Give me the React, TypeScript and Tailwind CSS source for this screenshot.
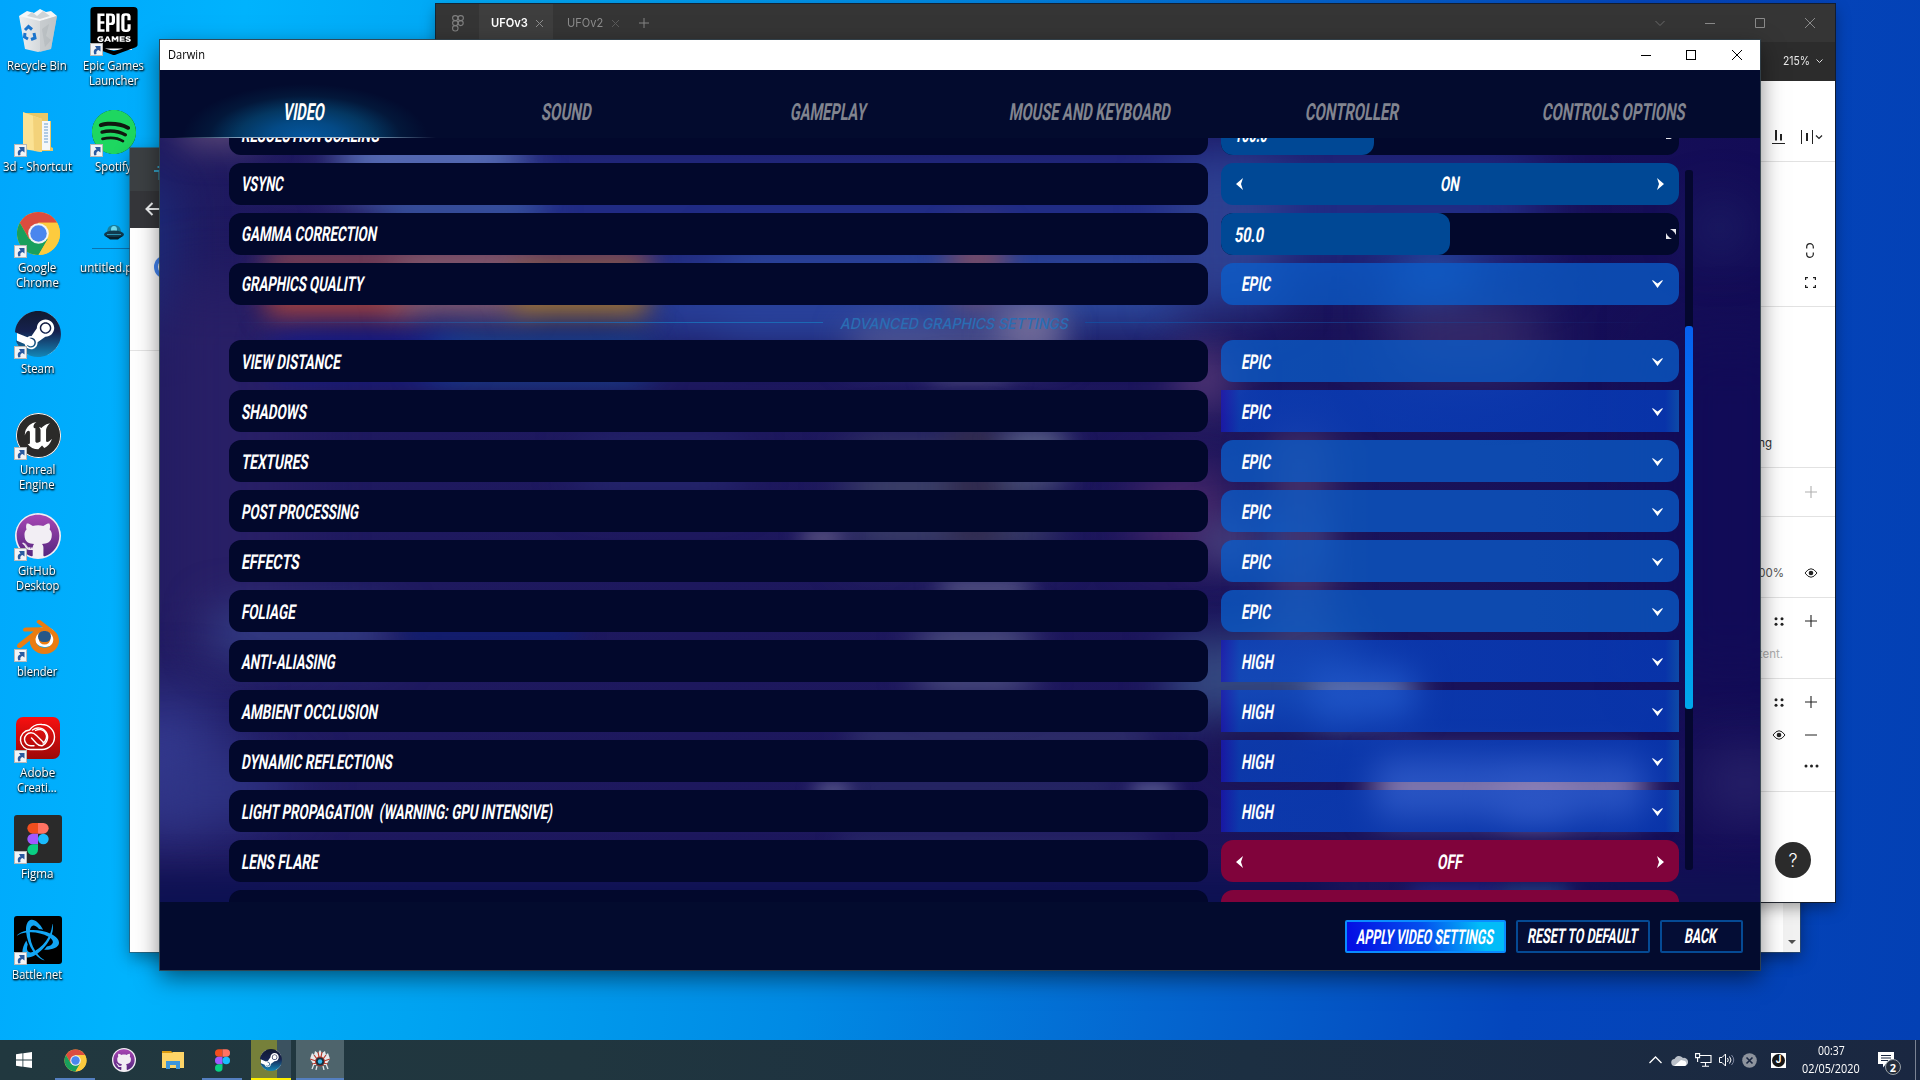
import { useLayoutEffect, useRef, useState, type ReactNode } from "react";
import { SiEpicgames, SiSpotify, SiSteam, SiUnrealengine, SiBlender, SiBattledotnet } from "react-icons/si";
import { FaGithub } from "react-icons/fa";

/* Text squeezed or stretched horizontally to a given width. */
function Fit({ w, skew = 0, className = "", children }: { w: number; skew?: number; className?: string; children: ReactNode }) {
  const ref = useRef<HTMLSpanElement>(null);
  const [scale, setScale] = useState(1);
  useLayoutEffect(() => {
    if (ref.current) setScale(w / ref.current.offsetWidth);
  }, [w, children]);
  return (
    <span className={`inline-block shrink-0 whitespace-pre ${className}`} style={{ width: w }}>
      <span ref={ref} className="inline-block origin-left" style={{ transform: `skewX(${-skew}deg) scaleX(${scale})` }}>
        {children}
      </span>
    </span>
  );
}

function Label({ w, className = "", children }: { w: number; className?: string; children: ReactNode }) {
  return (
    <Fit w={w} skew={9} className={`font-[Roboto,sans-serif] text-[20.5px] leading-[24px] font-bold text-white ${className}`}>
      {children}
    </Fit>
  );
}

/* ---------- product icons ---------- */

function Gradients() {
  return (
    <svg className="absolute h-0 w-0">
      <defs>
        <linearGradient id="steam" x1="0" y1="0" x2="0" y2="1">
          <stop offset="0" stopColor="#111a30" />
          <stop offset="0.45" stopColor="#16224f" />
          <stop offset="1" stopColor="#1387b8" />
        </linearGradient>
        <linearGradient id="hub" x1="0" y1="0" x2="0" y2="1">
          <stop offset="0" stopColor="#a846b4" />
          <stop offset="1" stopColor="#55277f" />
        </linearGradient>
        <linearGradient id="bin" x1="0" y1="0" x2="1" y2="0">
          <stop offset="0" stopColor="#eceff1" />
          <stop offset="0.55" stopColor="#d5d9dc" />
          <stop offset="1" stopColor="#b4babd" />
        </linearGradient>
        <linearGradient id="adobe" x1="0" y1="0" x2="0" y2="1">
          <stop offset="0" stopColor="#f81010" />
          <stop offset="1" stopColor="#9c0808" />
        </linearGradient>
      </defs>
    </svg>
  );
}

function Chrome({ size }: { size: number }) {
  return (
    <svg width={size} height={size} viewBox="0 0 48 48">
      <circle cx="24" cy="24" r="23" fill="#f9cb3a" />
      <path d="M4.1 12.5A23 23 0 0 1 43.9 12.5H24L14 29.8Z" fill="#db4c3f" />
      <path d="M4.1 12.5A23 23 0 0 0 24 47L34 29.8H14Z" fill="#199f5c" />
      <path d="M43.9 12.5A23 23 0 0 1 24 47L34 29.8L24 12.5Z" fill="#fdcb3e" />
      <circle cx="24" cy="24" r="11" fill="#f1f3f4" />
      <circle cx="24" cy="24" r="8.8" fill="#4a86ee" />
    </svg>
  );
}

function FigmaMark({ w, h }: { w: number; h: number }) {
  return (
    <svg width={w} height={h} viewBox="0 0 20 30">
      <path d="M5 0h5v10H5A5 5 0 0 1 5 0Z" fill="#f24e1e" />
      <path d="M10 0h5a5 5 0 0 1 0 10h-5Z" fill="#ff7262" />
      <path d="M5 10h5v10H5a5 5 0 0 1 0-10Z" fill="#a259ff" />
      <circle cx="15" cy="15" r="5" fill="#1abcfe" />
      <path d="M5 20h5v5a5 5 0 1 1-5-5Z" fill="#0acf83" />
    </svg>
  );
}

function GithubDesktop({ size }: { size: number }) {
  return (
    <span className="flex items-center justify-center rounded-full bg-[#f2eef4]" style={{ width: size, height: size }}>
      <FaGithub size={size - 2} fill="url(#hub)" />
    </span>
  );
}

function SteamIcon({ size }: { size: number }) {
  return (
    <span className="flex items-center justify-center rounded-full" style={{ width: size, height: size }}>
      <span className="flex items-center justify-center rounded-full bg-[linear-gradient(#fff,#fff)] bg-[length:92%_92%] bg-center bg-no-repeat">
        <SiSteam size={size} fill="url(#steam)" />
      </span>
    </span>
  );
}

function RecycleBin() {
  return (
    <svg width="40" height="44" viewBox="0 0 40 44">
      <path d="M1 7 39 7 33 40 20 43 7 40Z" fill="url(#bin)" />
      <path d="M1 7 9 2 16 4 22 0 28 3 33 2 39 7 22 12Z" fill="#f5f6f7" />
      <path d="M9 7 14 3 19 7 25 2 32 7 22 10Z" fill="#cfd4d7" />
      <path d="M22 12 39 7 33 40 22 43Z" fill="#c3c8cb" opacity="0.7" />
      <path d="M24 20 31 15 28 27 33 31 27 38Z" fill="#aeb4b8" opacity="0.5" />
      <g fill="none" stroke="#1b74cc" strokeWidth="3">
        <path d="M7 21 10.500 17.500 14 20.500" />
        <path d="M16 24 17 29 13 30.500" />
        <path d="M10 30 6.500 28 7 24" />
      </g>
    </svg>
  );
}

function Folder() {
  return (
    <svg width="34" height="42" viewBox="0 0 34 42">
      <path d="M2 2h25v8h3v26l2 1v3h-12L2 37Z" fill="#e9c766" />
      <path d="M20 10h9v29h-9Z" fill="#f4f7fa" />
      <path d="M23 13h4M23 16h4M23 19h4M23 22h4M23 25h4M23 28h4M23 31h4" stroke="#6d9ecb" strokeWidth="1.200" />
      <path d="M2 1 21 8v33L2 38Z" fill="#fbe294" />
      <path d="M12 5 21 8v33l-8-1Z" fill="#f3d27a" />
    </svg>
  );
}

function AdobeCC() {
  return (
    <svg width="44" height="42" viewBox="0 0 44 42">
      <rect width="44" height="42" rx="7" fill="url(#adobe)" />
      <g fill="none" stroke="#fff" strokeWidth="1.400" strokeLinecap="round">
        <path d="M15 32.500A9.500 9.500 0 0 1 13.500 13C16.500 9 21 7 26 7.500A12.500 12.500 0 0 1 26 32.500Z" />
        <path d="M18 28.800H15A6.500 6.500 0 0 1 15 15.800C17.500 15.800 19 17 20.500 18.500L28 26" />
        <path d="M16.500 13A9.300 9.300 0 1 1 26 28.800C23.500 28.800 22 28 20.500 26.500L15.500 21" />
        <path d="M19.500 13.500A6.600 6.600 0 1 1 27 26" />
      </g>
    </svg>
  );
}

function BlenderIcon() {
  return (
    <span className="relative flex h-[44px] w-[44px] items-center justify-center">
      <span className="absolute top-[12px] left-[18px] h-[20px] w-[22px] rounded-full bg-white" />
      <SiBlender className="relative h-[42px] w-[46px] text-[#ea7c10]" />
      <span className="absolute top-[16px] left-[22px] h-[11px] w-[13px] rounded-full bg-[#265787]" />
    </span>
  );
}

function UfoIcon() {
  return (
    <svg className="mt-[6px]" width="44" height="26" viewBox="0 0 44 26">
      <path d="M15 10C15 4 18 2 22 2s7 2 7 8Z" fill="#1b7f9c" />
      <ellipse cx="22" cy="6.500" rx="3" ry="3.500" fill="#6fdcf0" />
      <ellipse cx="22" cy="11.500" rx="10" ry="4" fill="#123c50" />
      <path d="M13 12.500q9 3 18 0l-5 4h-8Z" fill="#08202c" />
      <path d="M15 11.500h14" stroke="#2b96b6" strokeWidth="1" />
      <path d="M0 25.500h44" stroke="#0b73b0" />
    </svg>
  );
}

/* ---------- desktop ---------- */

function Shortcut() {
  return (
    <span className="absolute bottom-[-1px] left-0 flex h-[13px] w-[13px] items-center justify-center border border-[#b8b8b8] bg-[#f2f4f6]">
      <svg width="9" height="10" viewBox="0 0 9 10">
        <path d="M2.500 9.500C1 6.500 2 4 4.500 3.500L3 1H8.500V6.500L6.500 5C4.500 5.500 4 7 4.500 9Z" fill="#2a5aa0" />
      </svg>
    </span>
  );
}

function DesktopItem({ icon, lines, link = true }: { icon: ReactNode; lines: [string, number][]; link?: boolean }) {
  return (
    <div className="flex h-[101px] w-[76px] flex-col items-center">
      <div className="mt-px flex h-[48px] w-[48px] items-center justify-center relative">
        {icon}
        {link && <Shortcut />}
      </div>
      <div className="mt-[3px] mr-[2px] flex flex-col items-center font-['Open_Sans',sans-serif] text-[12px] leading-[15px] text-white [text-shadow:0_1px_2px_#000,1px_1px_2px_#000]">
        {lines.map(([t, w]) => (
          <Fit key={t} w={w}>{t}</Fit>
        ))}
      </div>
    </div>
  );
}

/* ---------- background windows ---------- */

function BrowserWindow() {
  return (
    <div className="absolute top-[148px] left-[130px] flex h-[804px] w-[1670px] flex-col bg-white shadow-[0_0_0_1px_rgba(60,80,90,0.6),0_6px_16px_rgba(0,0,0,0.4)]">
      <div className="flex h-[43px] shrink-0 items-center bg-[#3c4043] pt-[6px] pl-[24px]">
        <svg width="14" height="14" viewBox="0 0 14 14"><path d="M0 5h14M5.500 4V14M3.500 1h4" stroke="#35a0c4" strokeWidth="2" /></svg>
      </div>
      <div className="flex h-[37px] shrink-0 items-center bg-[#35363a] pb-px pl-[15px]">
        <svg width="16" height="14" viewBox="0 0 16 14" fill="none" stroke="#f1f3f4" strokeWidth="2"><path d="M16 7H2M7.500 1 1.500 7l6 6" /></svg>
      </div>
      <div className="flex min-h-0 flex-1 justify-between">
        <div className="flex w-full flex-col">
          <div className="flex h-[123px] border-b border-[#e4e4e4] pt-[27px] pl-[24px]">
            <span className="h-[24px] w-[24px] rounded-full border-4 border-[#4285f4]" />
          </div>
        </div>
        <div className="flex w-[17px] items-end justify-center bg-[#f1f1f1] pb-[8px]">
          <span className="h-0 w-0 border-x-4 border-t-4 border-x-transparent border-t-[#505050]" />
        </div>
      </div>
    </div>
  );
}

function Plus({ color = "#222" }: { color?: string }) {
  return <svg width="12" height="12" viewBox="0 0 12 12"><path d="M6 0v12M0 6h12" stroke={color} strokeWidth="1.100" /></svg>;
}
function Dots() {
  return (
    <svg width="10" height="9" viewBox="0 0 10 9" fill="#222">
      <circle cx="2" cy="1.700" r="1.500" /><circle cx="8" cy="1.700" r="1.500" /><circle cx="2" cy="7.300" r="1.500" /><circle cx="8" cy="7.300" r="1.500" />
    </svg>
  );
}
function Eye() {
  return (
    <svg width="14" height="10" viewBox="0 0 14 10" fill="none" stroke="#222">
      <path d="M1 5Q7-3.500 13 5 7 13.500 1 5Z" /><circle cx="7" cy="5" r="2.300" fill="#222" stroke="none" />
    </svg>
  );
}

function FigmaWindow() {
  return (
    <div className="absolute top-[4px] left-[436px] flex h-[898px] w-[1399px] flex-col bg-white font-[Inter,sans-serif] shadow-[0_0_0_1px_rgba(20,25,35,0.9),0_6px_14px_rgba(0,0,0,0.35)]">
      <div className="flex h-[38px] shrink-0 items-center justify-between bg-[#353535] text-[12px] text-[#8d8d8d]">
        <div className="flex h-full items-center">
          <div className="flex w-[43px] justify-center">
            <svg width="12" height="17" viewBox="0 0 12 17" fill="none" stroke="#808080" strokeWidth="1.100">
              <rect x="0.600" y="0.600" width="5.400" height="5" rx="2.500" /><rect x="6" y="0.600" width="5.400" height="5" rx="2.500" />
              <rect x="0.600" y="5.600" width="5.400" height="5" rx="2.500" /><circle cx="8.700" cy="8.100" r="2.500" /><rect x="0.600" y="10.600" width="5.400" height="5.400" rx="2.500" />
            </svg>
          </div>
          <div className="flex h-full w-[74px] items-center bg-[#3e3e3e] pl-[12px] font-semibold text-white">
            <Fit w={37}>UFOv3</Fit>
            <svg className="ml-[8px]" width="7" height="7" viewBox="0 0 7 7"><path d="m0 0 7 7M7 0 0 7" stroke="#8d8d8d" /></svg>
          </div>
          <div className="flex items-center pl-[14px]">
            <Fit w={36}>UFOv2</Fit>
            <svg className="ml-[9px]" width="7" height="7" viewBox="0 0 7 7"><path d="m0 0 7 7M7 0 0 7" stroke="#5a5a5a" /></svg>
            <svg className="ml-[20px]" width="10" height="10" viewBox="0 0 10 10"><path d="M5 0v10M0 5h10" stroke="#858585" /></svg>
          </div>
        </div>
        <svg width="160" height="12" viewBox="0 0 160 12" fill="none" stroke="#8a8a8a" className="mr-[20px]">
          <path d="m0.500 4 4.500 4.500L9.500 4" stroke="#6a6a6a" />
          <path d="M50 6.500h10M100.500 1.500h9v9h-9ZM150 1l10 10M160 1l-10 10" />
        </svg>
      </div>
      <div className="flex h-[39px] shrink-0 items-center justify-end bg-[#2c2c2c] pr-[12px] text-[11.500px] text-[#e8e8e8]">
        <Fit w={27}>215%</Fit>
        <svg className="ml-[6px]" width="7" height="5" viewBox="0 0 7 5"><path d="m0.500 0.500 3 3 3-3" fill="none" stroke="#ddd" /></svg>
      </div>
      <div className="ml-auto flex w-[240px] flex-1 flex-col text-[11.500px] [&>div]:border-[#e2e2e2]">
        <div className="flex h-[81px] shrink-0 items-end justify-end gap-[16px] border-b pr-[12px] pb-[17px]">
          <svg width="13" height="14" viewBox="0 0 13 14" fill="#222"><path d="M0 13h13v1H0ZM3 0h2v10.500H3ZM8 4h2v6.500H8Z" /></svg>
          <svg width="22" height="14" viewBox="0 0 22 14" fill="#222"><path d="M0 0h1v14H0ZM5 3h2v8H5ZM11 0h1v14h-1Z" /><path d="m15 5.500 3 3 3-3" fill="none" stroke="#222" strokeWidth="1.200" /></svg>
        </div>
        <div className="flex h-[145px] shrink-0 flex-col items-end justify-end gap-[19px] border-b pr-[19px] pb-[18px]">
          <svg className="mr-[2px]" width="8" height="15" viewBox="0 0 8 15" fill="none" stroke="#222" strokeWidth="1.200"><path d="M0.700 5.500V4a3.300 3.300 0 0 1 6.600 0v1.500M0.700 9.500V11a3.300 3.300 0 0 0 6.600 0V9.500" /></svg>
          <svg width="11" height="11" viewBox="0 0 11 11" fill="none" stroke="#222" strokeWidth="1.200"><path d="M3 0.600H0.600V3M8 0.600h2.400V3M3 10.400H0.600V8M8 10.400h2.400V8" /></svg>
        </div>
        <div className="flex h-[161px] shrink-0 items-end justify-end border-b pr-[63px] pb-[15px] leading-[18px] text-[#333]"><span>Clip pulling</span></div>
        <div className="flex h-[49px] shrink-0 items-center justify-end border-b pr-[18px] pb-px"><Plus color="#b0b0b0" /></div>
        <div className="flex h-[81px] shrink-0 items-end justify-end border-b pr-[17px] pb-[19px] text-[#555]">
          <span className="mr-[20px] leading-[10px]">100%</span><Eye />
        </div>
        <div className="flex h-[81px] shrink-0 flex-col items-end justify-end gap-[20px] border-b pr-[18px] pb-[17px]">
          <div className="flex items-center gap-[21px]"><Dots /><Plus /></div>
          <span className="mr-[34px] leading-[14px] text-[#b0b0b0]">content.</span>
        </div>
        <div className="flex h-[113px] shrink-0 flex-col items-end border-b pt-[17px] pr-[18px]">
          <div className="flex items-center gap-[21px]"><Dots /><Plus /></div>
          <div className="mt-[22px] flex items-center gap-[19px]"><Eye /><svg width="12" height="2"><path d="M0 1h12" stroke="#222" /></svg></div>
          <svg className="mt-[24px] mr-[-2px]" width="15" height="4" fill="#222"><circle cx="2" cy="2" r="1.500" /><circle cx="7.500" cy="2" r="1.500" /><circle cx="13" cy="2" r="1.500" /></svg>
        </div>
        <div className="flex flex-1 items-start justify-end pt-[50px] pr-[24px]">
          <span className="flex h-[36px] w-[36px] items-center justify-center rounded-full bg-[#2c2c2c] text-[18px] font-light text-white">?</span>
        </div>
      </div>
    </div>
  );
}

/* ---------- game settings ---------- */

type Blob = [x: number, y: number, w: number, h: number, color: string, blur: number];

/* Soft light patches behind the settings list, measured from the list's top left corner. */
const blobs: Blob[] = [
  [-40, 40, 50, 150, "#1b3080", 26],
  [20, -40, 80, 50, "#584676", 16],
  [0, 140, 140, 380, "#281f66", 30],
  [50, 470, 180, 50, "#343f86", 22],
  [-60, 560, 120, 130, "#343a90", 32],
  [-20, 620, 150, 60, "#2f3586", 28],
  [320, 10, 1060, 120, "#212c86", 30],
  [180, -20, 180, 80, "#566bb4", 20],
  [220, 50, 160, 50, "#36519e", 18],
  [560, 110, 470, 80, "#2d4ba0", 24],
  [480, 130, 300, 70, "#28409a", 22],
  [105, 105, 385, 30, "#7c4456", 14],
  [105, 135, 150, 46, "#9c4040", 13],
  [235, 120, 130, 58, "#8c6272", 16],
  [350, 130, 138, 50, "#9a7038", 13],
  [110, 200, 190, 36, "#101a94", 16],
  [270, 200, 220, 40, "#1450a0", 18],
  [240, 484, 180, 22, "#0c1f74", 12],
  [420, 300, 160, 60, "#24266c", 20],
  [790, 90, 55, 80, "#704a6a", 14],
  [690, 190, 210, 30, "#5c6096", 18],
  [840, 160, 60, 56, "#706a98", 16],
  [770, 226, 80, 14, "#68688e", 12],
  [690, 300, 200, 120, "#383c66", 22],
  [640, 390, 44, 20, "#5e5884", 10],
  [790, 280, 50, 130, "#302a4e", 14],
  [845, 290, 60, 50, "#565d86", 14],
  [780, 440, 90, 24, "#5a5a88", 12],
  [760, 480, 110, 80, "#484a7c", 18],
  [690, 592, 300, 16, "#404678", 14],
  [690, 640, 270, 20, "#2c3068", 14],
  [655, 646, 36, 14, "#686a98", 9],
  [970, 646, 44, 14, "#6a70a0", 9],
  [680, 700, 310, 10, "#3a4078", 12],
  [1020, 210, 50, 60, "#5c3c7a", 22],
  [980, 330, 90, 90, "#48286a", 24],
  [1010, 20, 110, 150, "#2e4090", 24],
  [1040, 385, 60, 40, "#484480", 18],
  [1115, 380, 40, 44, "#0f70d8", 16],
  [1110, 290, 60, 230, "#44306a", 20],
  [1010, 500, 190, 80, "#344880", 22],
  [1150, 530, 105, 50, "#5870b4", 16],
  [1060, 590, 90, 40, "#1c1450", 18],
  [1240, 120, 70, 50, "#2a68c8", 26],
  [1230, 160, 150, 80, "#352a6a", 28],
  [1215, 620, 270, 60, "#8078b0", 16],
  [1340, 640, 70, 40, "#8c80b8", 16],
  [1250, 752, 90, 10, "#2a3aac", 10],
  [1340, 752, 70, 10, "#2a6ca8", 10],
  [1540, 70, 40, 40, "#222a70", 26],
  [1540, 610, 90, 70, "#28226a", 28],
  [1500, 200, 140, 340, "#110b57", 30],
  [-60, 735, 1230, 60, "#0d1152", 16],
  [1430, 735, 200, 60, "#0f1152", 16],
];

function Backdrop() {
  return (
    <div className="absolute inset-0 overflow-hidden bg-[linear-gradient(90deg,#1f1a60,#1c175c_50%,#1a135a_75%,#130c56)]">
      {blobs.map(([x, y, w, h, color, blur], i) => (
        <span key={i} className="absolute rounded-[12px]" style={{ left: x, top: y, width: w, height: h, backgroundColor: color, filter: `blur(${blur}px)` }} />
      ))}
    </div>
  );
}

function Arrow({ right = false }: { right?: boolean }) {
  return (
    <svg width="9" height="12" viewBox="0 0 9 12" className={right ? "" : "-scale-x-100"}>
      <path d="M1 0 8 6 1 12 3 6Z" fill="#fff" />
    </svg>
  );
}

function Toggle({ text, w, off = false }: { text: string; w: number; off?: boolean }) {
  return (
    <div className={`flex h-full w-full items-center justify-between rounded-[12px] px-[14px] ${off ? "bg-[#80033b] pt-[2px]" : "bg-[#004895]"}`}>
      <Arrow />
      <Label w={w}>{text}</Label>
      <Arrow right />
    </div>
  );
}

function Slider({ text, w, fill }: { text: string; w: number; fill: number }) {
  return (
    <div className="flex h-full w-full items-center justify-between rounded-[12px] bg-[#02082c] pr-[3px]">
      <div className="flex h-full items-center rounded-[12px] bg-[#004895] pt-[2px] pl-[14px]" style={{ width: fill }}>
        <Label w={w}>{text}</Label>
      </div>
      <svg width="10" height="10" viewBox="0 0 10 10" fill="#e6e6ec"><path d="M4 0h6v6L8.500 3.500 6.500 1.500ZM0 4v6h6L3.500 8.500 1.500 6.500Z" /></svg>
    </div>
  );
}

function Select({ text, w, changed = false, low = false }: { text: string; w: number; changed?: boolean; low?: boolean }) {
  return (
    <div
      className={`flex h-full w-full items-center justify-between pr-[16px] pl-[21px] ${low ? "pt-[2px]" : ""} ${
        changed
          ? "bg-[linear-gradient(90deg,rgba(24,24,190,0.72),rgba(6,72,205,0.7)_4%,rgba(4,66,200,0.72)_97%,rgba(12,92,190,0.78))]"
          : "rounded-[12px] bg-[rgba(9,95,205,0.74)]"
      }`}
    >
      <Label w={w}>{text}</Label>
      <svg width="11" height="8" viewBox="0 0 11 8"><path d="M0 0.500Q1 0 2 1L5.500 3.500 9 1Q10 0 11 0.500L5.500 8Z" fill="#fff" /></svg>
    </div>
  );
}

function Row({ name, w, low = false, children }: { name: string; w: number; low?: boolean; children: ReactNode }) {
  return (
    <div className="mb-[8px] flex h-[42px] shrink-0 gap-[13px]">
      <div className={`flex w-[979px] items-center rounded-[12px] bg-[#02082c] pl-[13px] ${low ? "pt-[2px]" : ""}`}><Label w={w}>{name}</Label></div>
      <div className="w-[458px]">{children}</div>
    </div>
  );
}

const advanced: [string, number, string, number, boolean][] = [
  ["VIEW DISTANCE", 99, "EPIC", 29, false],
  ["SHADOWS", 65, "EPIC", 29, true],
  ["TEXTURES", 67, "EPIC", 29, false],
  ["POST PROCESSING", 117, "EPIC", 29, false],
  ["EFFECTS", 58, "EPIC", 29, false],
  ["FOLIAGE", 54, "EPIC", 29, false],
  ["ANTI-ALIASING", 94, "HIGH", 32, true],
  ["AMBIENT OCCLUSION", 136, "HIGH", 32, true],
  ["DYNAMIC REFLECTIONS", 151, "HIGH", 32, true],
  ["LIGHT PROPAGATION  (WARNING: GPU INTENSIVE)", 311, "HIGH", 32, true],
];

const tabs: [string, number][] = [
  ["VIDEO", 41], ["SOUND", 50], ["GAMEPLAY", 76], ["MOUSE AND KEYBOARD", 161], ["CONTROLLER", 93], ["CONTROLS OPTIONS", 143],
];

function GameWindow() {
  return (
    <div className="absolute top-[40px] left-[160px] flex h-[930px] w-[1600px] flex-col bg-[#030b2e] shadow-[0_0_0_1px_rgba(50,65,75,0.9),0_8px_22px_rgba(0,0,0,0.5)]">
      <div className="flex h-[30px] shrink-0 items-center justify-between bg-white pr-[18px] pl-[8px]">
        <Fit w={37} className="font-['Open_Sans',sans-serif] text-[12px] text-black">Darwin</Fit>
        <svg width="102" height="12" viewBox="0 0 102 12" fill="none" stroke="#000" shapeRendering="crispEdges" className="mb-px">
          <path d="M1 6.500h10M46.500 1.500h9v9h-9Z" /><path d="m92 1 10 10M102 1 92 11" shapeRendering="auto" />
        </svg>
      </div>
      <div className="relative z-10 flex h-[68px] shrink-0 overflow-hidden bg-[#030b2e] px-[14px]">
        {tabs.map(([t, w], i) => (
          <div key={t} className="relative flex h-full flex-1 items-center justify-center pt-[15px] pr-px">
            {i === 0 && (
              <>
                <span className="absolute bottom-0 left-[8px] h-[54px] w-[246px] bg-[radial-gradient(ellipse_50%_100%_at_50%_100%,#05579f_0%,#044a86_30%,rgba(4,66,110,0.8)_55%,rgba(3,36,70,0.5)_78%,transparent)]" />
                <span className="absolute bottom-0 left-0 h-px w-full bg-[linear-gradient(90deg,transparent,#9db4cc_30%,#b9cbe0_50%,#9db4cc_70%,transparent)]" />
              </>
            )}
            <Fit w={w} skew={9} className={`relative font-[Roboto,sans-serif] text-[23.500px] leading-[26px] font-bold ${i ? "text-[#81848f]" : "text-white"}`}>{t}</Fit>
          </div>
        ))}
      </div>
      <div className="relative h-[764px] shrink-0 overflow-hidden">
        <Backdrop />
        <div className="relative flex">
          <div className="mt-[-25px] ml-[69px] flex h-[789px] w-[1450px] flex-col overflow-hidden">
            <Row name="RESOLUTION SCALING" w={138} low><Slider text="100.0" w={33} fill={153} /></Row>
            <Row name="VSYNC" w={42}><Toggle text="ON" w={19} /></Row>
            <Row name="GAMMA CORRECTION" w={135}><Slider text="50.0" w={29} fill={229} /></Row>
            <Row name="GRAPHICS QUALITY" w={122}><Select text="EPIC" w={29} /></Row>
            <div className="flex h-[27px] shrink-0 items-start">
              <span className="mt-[9px] h-px w-[594px] bg-[linear-gradient(90deg,transparent,#1c68b4_80%)]" />
              <Fit w={228} skew={12} className="ml-[18px] font-[Inter,sans-serif] text-[15px] leading-[21px] font-medium text-[#2a6db4]">ADVANCED GRAPHICS SETTINGS</Fit>
              <span className="mt-[9px] ml-[16px] h-px w-[580px] bg-[linear-gradient(90deg,#164a9c,transparent)]" />
            </div>
            {advanced.map(([n, w, v, vw, c]) => (
              <Row key={n} name={n} w={w} low><Select text={v} w={vw} changed={c} low /></Row>
            ))}
            <Row name="LENS FLARE" w={77} low><Toggle text="OFF" w={25} off /></Row>
            <Row name="" w={1}><Toggle text="" w={1} off /></Row>
          </div>
          <div className="mt-[32px] ml-[6px] h-[700px] w-[8px] rounded-[3px] bg-[#04072f] pt-[156px]">
            <div className="h-[383px] rounded-[3px] bg-[linear-gradient(#0660f0,#0080f0_40%,#00a8ec)]" />
          </div>
        </div>
      </div>
      <div className="relative flex flex-1 items-start justify-end gap-[10px] bg-[#030b2e] pt-[18px] pr-[17px]">
        <div className="flex h-[33px] w-[161px] items-center justify-center rounded-[2px] border-2 border-[#0a8cff] bg-[linear-gradient(75deg,#0410e4_5%,#0450ee_50%,#02bcf8_85%)] pr-px"><Label w={137}>APPLY VIDEO SETTINGS</Label></div>
        <div className="flex h-[33px] w-[134px] items-center justify-center rounded-[2px] border-2 border-[#054a94] bg-[#040d35] pr-px pb-px"><Label w={110}>RESET TO DEFAULT</Label></div>
        <div className="flex h-[33px] w-[83px] items-center justify-center rounded-[2px] border-2 border-[#054a94] bg-[#040d35] pr-[2px] pb-px"><Label w={32}>BACK</Label></div>
      </div>
    </div>
  );
}

/* ---------- taskbar ---------- */

function Task({ children, className = "w-[40px] mr-[9px]", line }: { children: ReactNode; className?: string; line?: string }) {
  return (
    <div className={`relative flex h-full items-center justify-center ${className}`}>
      {children}
      {line && <span className={`absolute bottom-0 left-0 h-[2px] w-full ${line}`} />}
    </div>
  );
}

function Taskbar() {
  return (
    <div className="relative flex h-[40px] items-center justify-between bg-[linear-gradient(90deg,#21383f,#20363f_30%,#1c2f42_65%,#1a2741)]">
      <div className="flex h-full">
        <Task className="mr-[7px] w-[48px]">
          <svg width="16" height="16" viewBox="0 0 16 16" fill="#fff"><path d="M0 2.200 6.500 1.300V7.600H0ZM7.300 1.200 16 0V7.600H7.300ZM0 8.400H6.500V14.700L0 13.800ZM7.300 8.400H16V16L7.300 14.800Z" /></svg>
        </Task>
        <Task line="bg-[#547fc0]"><Chrome size={23} /></Task>
        <Task><GithubDesktop size={24} /></Task>
        <Task>
          <svg width="22" height="18" viewBox="0 0 22 18"><path d="M0 0h9l2 2H0Z" fill="#dc9c10" /><path d="M0 2h10l1-1h11v16H0Z" fill="#fdd467" /><path d="M4 10h14v8h-4v-4H8v4H4Z" fill="#3d96dc" /></svg>
        </Task>
        <Task line="bg-[#547fc0]"><FigmaMark w={15} h={23} /></Task>
        <Task line="bg-[#fff000]" className="mr-[5px] w-[40px] bg-[linear-gradient(90deg,#76803a_65%,#3b5260_65%)]"><SteamIcon size={22} /></Task>
        <Task line="bg-[#547fc0]" className="w-[48px] bg-[#4e646c]">
          <svg width="22" height="20" viewBox="0 0 22 20">
            <path d="M1 9 3 3l2 2 1-4 3 2 2-3 2 3 3-2 1 4 2-2 2 6-4 6H5Z" fill="#e6eaec" />
            <path d="M5 5l3 4M17 5l-3 4M9 2l1 5M13 2l-1 5M1 9l6 2M21 9l-6 2M3 14l5-1M19 14l-5-1" stroke="#b83a2c" strokeWidth="1.200" />
            <circle cx="11" cy="11.500" r="5" fill="#b3382a" /><circle cx="11" cy="11.500" r="4" fill="#15303f" /><circle cx="11" cy="11.500" r="2.200" fill="#35b5e8" />
            <path d="M5 14 3 19M17 14l2 5M8 16l-1 4M14 16l1 4" stroke="#dfe5e7" strokeWidth="1.300" />
          </svg>
        </Task>
      </div>
      <div className="flex h-full items-center font-['Open_Sans',sans-serif] text-white">
        <svg width="13" height="8" viewBox="0 0 13 8" fill="none" stroke="#fff" strokeWidth="1.300"><path d="m0.500 7 6-6 6 6" /></svg>
        <svg className="ml-[9px]" width="17" height="11" viewBox="0 0 17 11"><path d="M4 11a3.500 3.500 0 0 1-.5-7A5 5 0 0 1 12 3a4 4 0 0 1 2 8Z" fill="#b9bfc8" /><path d="M3 11 10 5l4 1a3 3 0 0 1 0 5Z" fill="#fff" /></svg>
        <svg className="ml-[7px]" width="17" height="14" viewBox="0 0 17 14" fill="none" stroke="#fff" strokeWidth="1.100"><path d="M5 2.500h11v7H5.500M10.500 9.500v3.500M7 13.300h7M0.600 0.600h4v4h-4ZM2.600 4.600V9" /></svg>
        <svg className="ml-[7px]" width="16" height="14" viewBox="0 0 16 14" fill="none" stroke="#fff"><path d="M0.500 4.500H3L6.500 1v12L3 9.500H0.500ZM8.500 5q1.500 2 0 4M10.500 3.500q3 3.500 0 7" /><path d="M12.500 2q4.500 5 0 10" stroke="#8088a0" /></svg>
        <svg className="ml-[7px]" width="15" height="15" viewBox="0 0 15 15"><circle cx="7.500" cy="7.500" r="7.300" fill="#8d939d" /><path d="m4.500 4.500 6 6M10.500 4.500l-6 6" stroke="#1a2741" strokeWidth="1.600" /></svg>
        <span className="ml-[14px] flex h-[15px] w-[15px] items-center justify-center bg-white"><span className="flex h-[13px] w-[13px] items-center justify-center rounded-full bg-[#151515] pb-px font-[Roboto,sans-serif] text-[10px] leading-none font-bold">J</span></span>
        <div className="ml-[16px] flex flex-col items-center text-[12px] leading-[18px]"><Fit w={27}>00:37</Fit><Fit w={58}>02/05/2020</Fit></div>
        <div className="relative ml-[18px]">
          <svg width="16" height="16" viewBox="0 0 16 16"><path d="M0 0h16v12H8l-3 3.500V12H0Z" fill="#fff" /><path d="M3 3.500h10M3 6h10M3 8.500h7" stroke="#1a2741" /></svg>
          <span className="absolute top-[7px] left-[7px] flex h-[16px] w-[16px] items-center justify-center rounded-full border border-[#98a0a8] bg-[#232c3a] text-[11px] leading-none font-bold">2</span>
        </div>
        <span className="mr-[4px] ml-[21px] h-full w-px bg-[#7b8394]" />
      </div>
    </div>
  );
}

export default function App() {
  return (
    <div className="relative flex h-[1080px] w-[1920px] flex-col overflow-hidden bg-[#0443b8]">
      <Gradients />
      <div className="relative flex h-[1040px] bg-[linear-gradient(97deg,#00a6fc,#00b3fd_12%,#00a4f2_26%,#008ae4_45%,#0467d0_62%,#0446bc_80%,#0340b4)] pt-[6px]">
        <div className="flex flex-col">
          <DesktopItem icon={<RecycleBin />} lines={[["Recycle Bin", 60]]} link={false} />
          <DesktopItem icon={<Folder />} lines={[["3d - Shortcut", 69]]} />
          <DesktopItem icon={<Chrome size={45} />} lines={[["Google", 38], ["Chrome", 43]]} />
          <DesktopItem icon={<SteamIcon size={46} />} lines={[["Steam", 33]]} />
          <DesktopItem
            icon={<span className="flex h-[45px] w-[45px] items-center justify-center rounded-full bg-[#2b2a29]"><SiUnrealengine size={45} className="text-white" /></span>}
            lines={[["Unreal", 35], ["Engine", 36]]}
          />
          <DesktopItem icon={<GithubDesktop size={46} />} lines={[["GitHub", 38], ["Desktop", 43]]} />
          <DesktopItem icon={<BlenderIcon />} lines={[["blender", 40]]} />
          <DesktopItem icon={<AdobeCC />} lines={[["Adobe", 35], ["Creati...", 40]]} />
          <DesktopItem icon={<span className="flex h-[48px] w-[48px] items-center justify-center rounded-[3px] bg-[#2a2a2a]"><FigmaMark w={22} h={32} /></span>} lines={[["Figma", 33]]} />
          <DesktopItem icon={<span className="flex h-[48px] w-[48px] items-center justify-center rounded-[3px] bg-black"><SiBattledotnet size={42} className="text-[#12a5f4]" /></span>} lines={[["Battle.net", 50]]} />
        </div>
        <div className="flex flex-col">
          <DesktopItem icon={<span className="flex h-[48px] w-[48px] scale-x-[1.14] items-center justify-center"><SiEpicgames size={48} className="text-black [background:linear-gradient(#fff,#fff)_center/66%_80%_no-repeat]" /></span>} lines={[["Epic Games", 61], ["Launcher", 49]]} />
          <DesktopItem icon={<span className="flex rounded-full bg-[#10180f]"><SiSpotify size={44} className="text-[#1ed760]" /></span>} lines={[["Spotify", 37]]} />
          <DesktopItem icon={<UfoIcon />} lines={[["untitled.png", 66]]} link={false} />
        </div>
        <BrowserWindow />
        <FigmaWindow />
        <GameWindow />
      </div>
      <Taskbar />
    </div>
  );
}
